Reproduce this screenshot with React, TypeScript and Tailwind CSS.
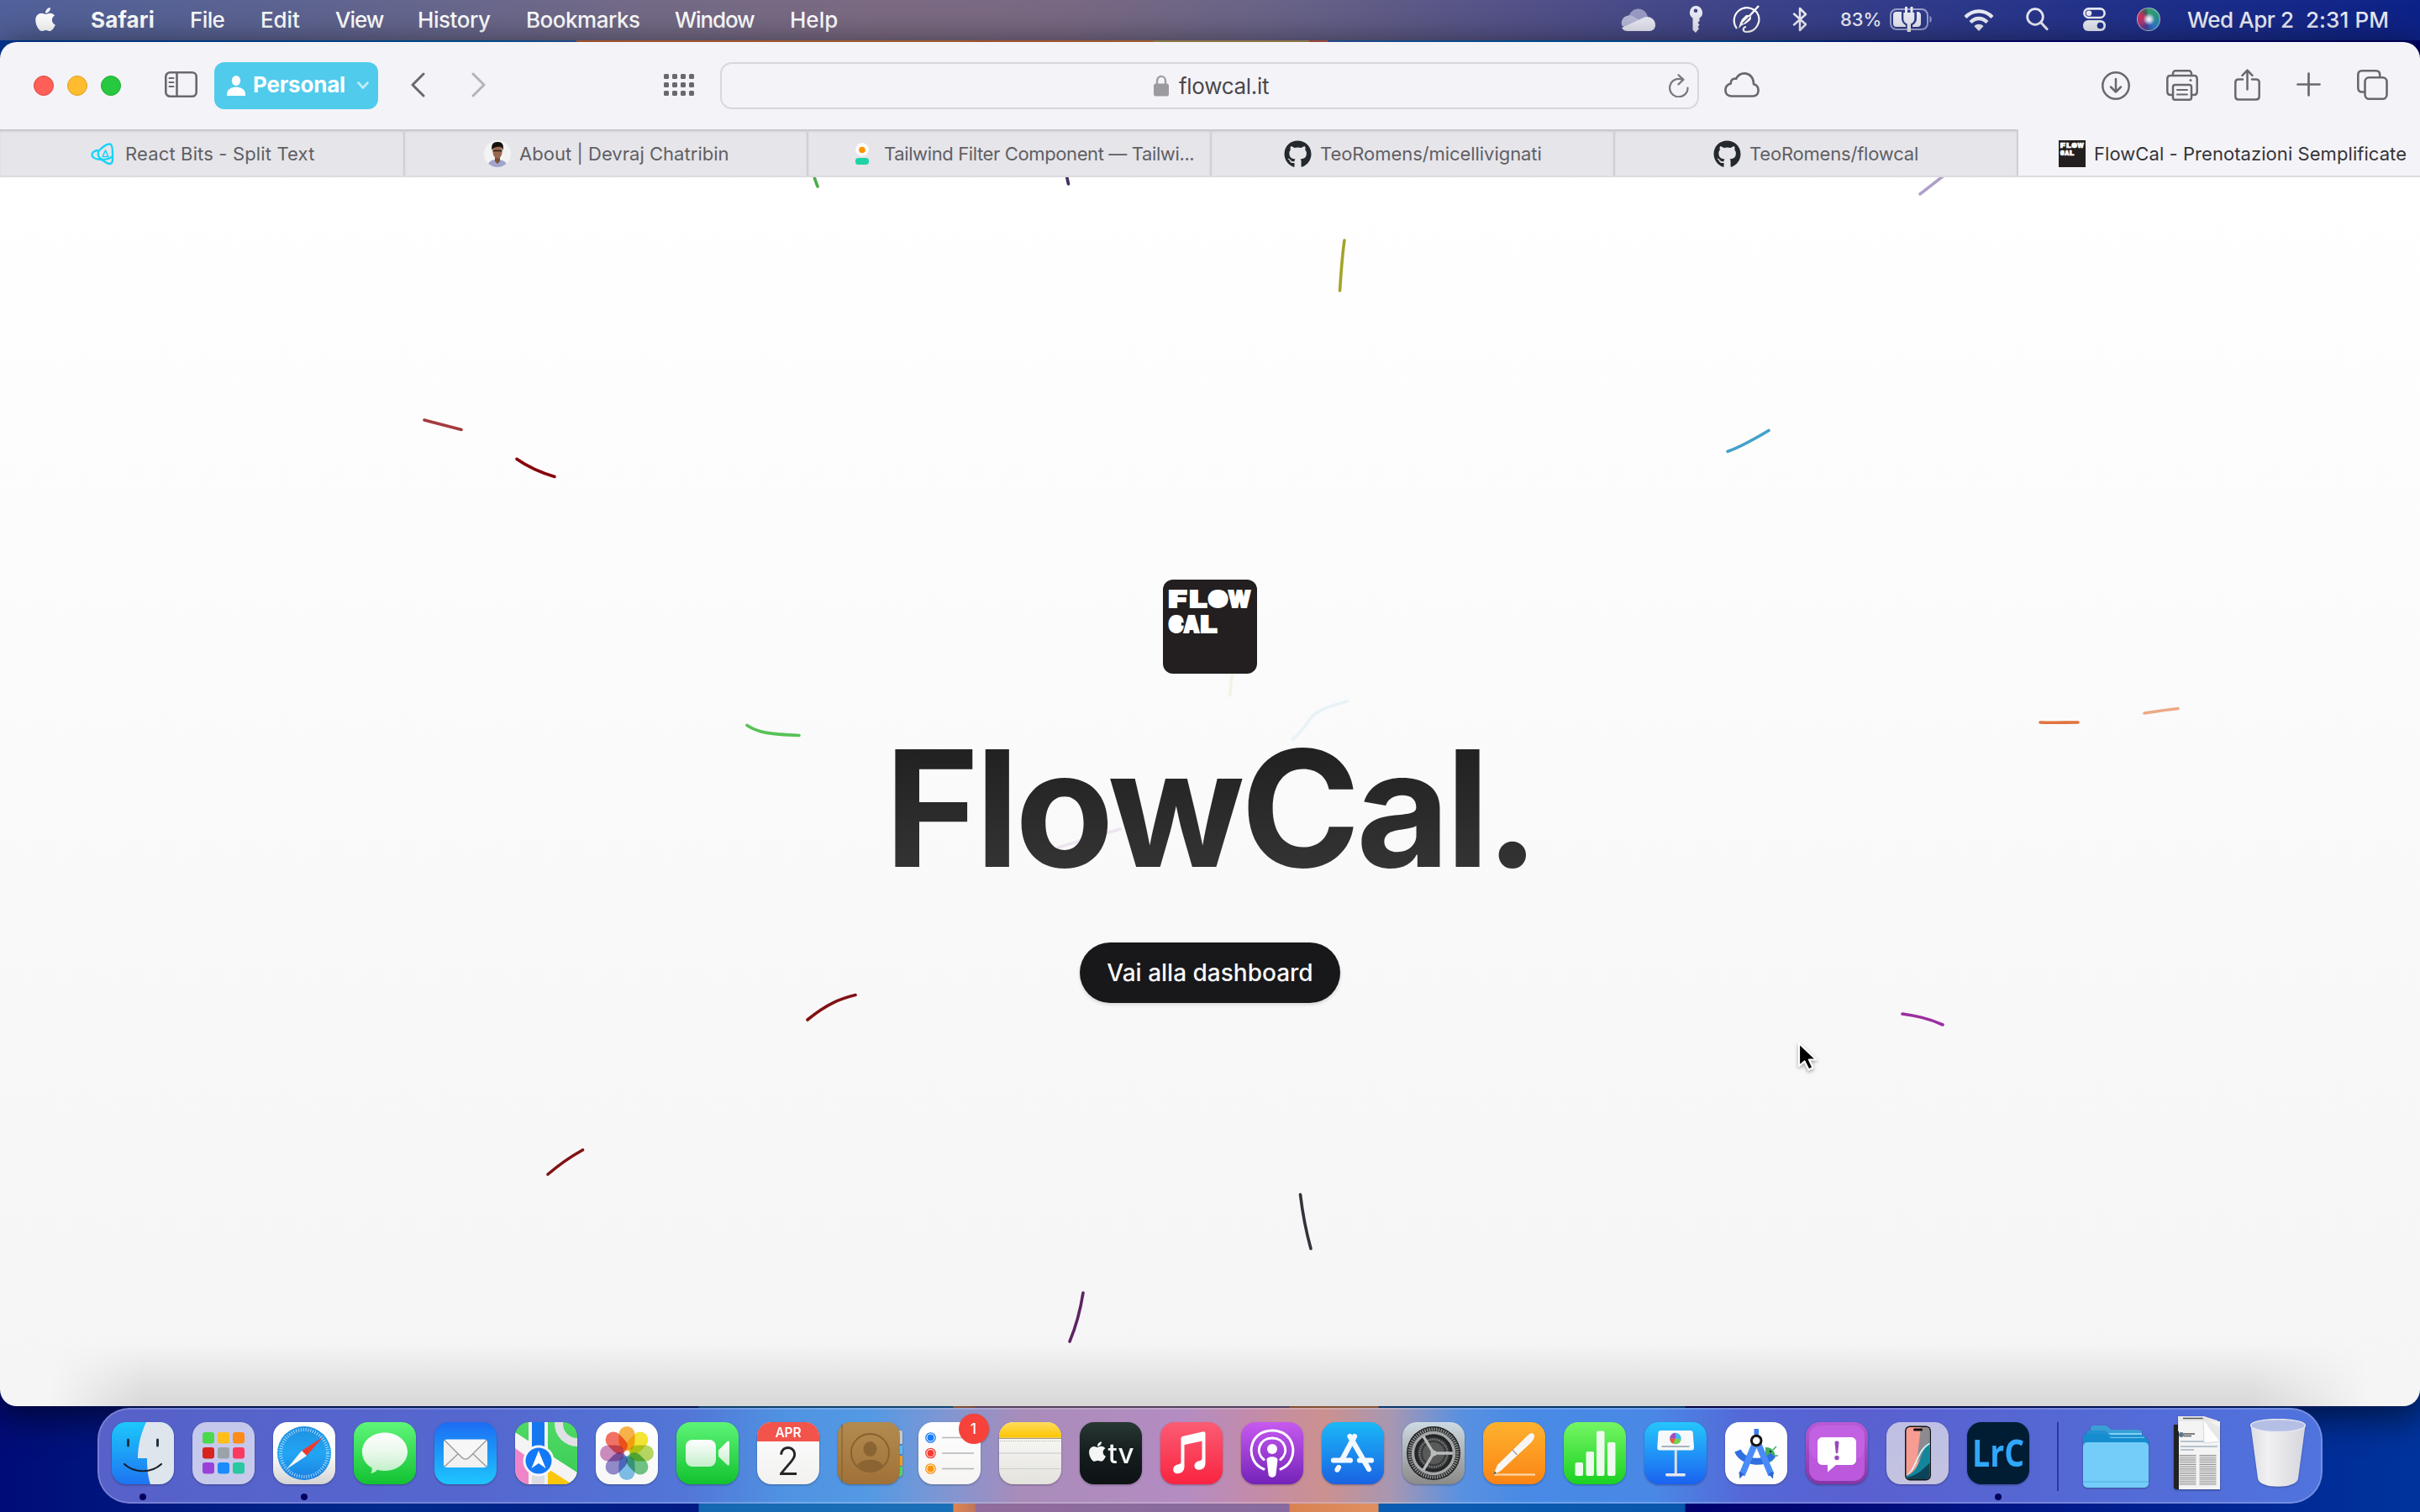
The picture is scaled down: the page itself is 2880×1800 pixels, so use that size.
import React from "react";
import { FaApple, FaGithub } from "react-icons/fa";

type Kids = { children?: React.ReactNode };

/* ---------- menu bar ---------- */

const MENUS = [
  { label: "File", cls: "w-[84px] tracking-[-0.6px]" },
  { label: "Edit", cls: "w-[89px] tracking-[-0.1px]" },
  { label: "View", cls: "w-[98px] tracking-[-1px]" },
  { label: "History", cls: "w-[129px] tracking-[-0.45px]" },
  { label: "Bookmarks", cls: "w-[177px] tracking-[-0.48px]" },
  { label: "Window", cls: "w-[137px] tracking-[-1.1px]" },
  { label: "Help", cls: "w-[80px]" },
];

function StatusIcons() {
  return (
    <div className="flex h-full items-center text-[#e9eaf4]">
      <svg width="42" height="30" viewBox="0 0 42 30" className="mr-[38px] shrink-0">
        <path d="M9 13C11 4 19 0 26 4c4 2 6 6 6 10l-14 8z" fill="#9a9bc6" />
        <path d="M1 22C-1 13 8 8 14 11l12 7-20 8z" fill="#b9bad9" />
        <path d="M27 13c7-3 14 2 14 9 0 4-3 7-7 7H8c-3 0-5-1-7-4z" fill="#e9eaf4" />
      </svg>
      <svg width="18" height="34" viewBox="0 0 18 34" className="mr-[35px] shrink-0">
        <path
          fillRule="evenodd"
          d="M9 1a8 8 0 0 1 4.500 14.600V19l-2 2 2 2.500-2 2.500 1.500 2L9 33l-3.500-3.500V15.600A8 8 0 0 1 9 1zm0 3.500a2.300 2.300 0 1 0 0 4.600 2.300 2.300 0 0 0 0-4.600z"
          fill="#e9eaf4"
        />
      </svg>
      <svg width="33" height="34" viewBox="0 0 33 34" className="mr-[38px] shrink-0" fill="none" stroke="#fff" strokeWidth="2.200">
        <path d="M5 28A15 15 0 1 1 29 9a15 15 0 0 1-12 23c-6 0-5-6-1-6" />
        <path d="M31 1 20 13" strokeWidth="2.500" />
        <path d="M20 12c3 2 2 4 1 6l-5 4-5 2-4 4 2-7 2-4 5-5z" fill="#fff" stroke="none" />
        <path d="m12 22 8-8" stroke="#3c4289" strokeWidth="1.200" />
      </svg>
      <svg width="18" height="30" viewBox="0 0 18 30" className="mr-[39px] shrink-0" fill="none" stroke="#e9eaf4" strokeWidth="2.500" strokeLinejoin="round" strokeLinecap="round">
        <path d="M2 8.500 16 21l-7 7V2l7 7L2 21.500" />
      </svg>
      <span className="mr-[10px] w-[49px] text-[22px] font-medium tracking-[-0.1px]">83%</span>
      <svg width="52" height="34" viewBox="0 0 52 34" className="mr-[36px] shrink-0">
        <rect x="1" y="5" width="44" height="24" rx="7" fill="none" stroke="#9aa0cc" strokeWidth="2" />
        <path d="M47.500 13c3 1 3 7 0 8z" fill="#9aa0cc" />
        <path d="M8 8h6v8c0 4 3 7 5 8v2H8a4 4 0 0 1-4-4V12a4 4 0 0 1 4-4zM32 8h1c2.500 0 4 1.500 4 4v10c0 2.500-1.500 4-4 4h-6v-2c3-2 5-4 5-8z" fill="#e9eaf4" />
        <path d="M19.500 2v9M26 2v9" stroke="#e9eaf4" strokeWidth="3" />
        <path d="M16.300 9h13v7c0 4-2.500 5.500-4.300 6.500v9.500h-4.300v-9.500c-2-1-4.400-2.500-4.400-6.500z" fill="#e9eaf4" />
      </svg>
      <svg width="36" height="27" viewBox="0 0 36 27" className="mr-[38px] shrink-0" fill="none" stroke="#e9eaf4" strokeWidth="4.300">
        <path d="M2 10.500c9-9.500 23-9.500 32 0" />
        <path d="M8 16.500c6-6 14-6 20 0" />
        <path d="M12.500 21.200c3-3.200 8-3.200 11 0L18 27z" fill="#e9eaf4" stroke="none" />
      </svg>
      <svg width="27" height="28" viewBox="0 0 27 28" className="mr-[41px] shrink-0" fill="none" stroke="#e9eaf4" strokeWidth="2.800" strokeLinecap="round">
        <circle cx="11" cy="11" r="9.300" />
        <path d="m18 18 7 7.500" strokeWidth="3.200" />
      </svg>
      <svg width="27" height="28" viewBox="0 0 27 28" className="mr-[37px] shrink-0">
        <rect x="1.400" y="1.400" width="24.200" height="10.600" rx="5.300" fill="none" stroke="#e9eaf4" strokeWidth="2.600" />
        <circle cx="7" cy="6.700" r="3.300" fill="#e9eaf4" />
        <rect x="0" y="15" width="27" height="13" rx="6" fill="#e9eaf4" />
        <circle cx="20.500" cy="21.500" r="3.800" fill="#24348a" />
      </svg>
      <span className="mr-[32px] h-[28px] w-[28px] shrink-0 rounded-full border border-white/50 bg-[radial-gradient(circle_at_52%_50%,#ffffff_0%,#d8dcf0_14%,transparent_38%),conic-gradient(#35a070,#2a9488_20%,#2b7fd0_40%,#4a3f9a_55%,#a83a78_68%,#d0305c_82%,#4a5a60_94%,#35a070)]" />
      <span className="w-[141px] text-[26px] font-medium tracking-[-0.44px] whitespace-nowrap">Wed Apr 2</span>
      <span className="text-[26px] font-medium tracking-[0.1px] whitespace-nowrap">2:31 PM</span>
    </div>
  );
}

function MenuBar() {
  return (
    <header className="flex h-[48px] items-center justify-between bg-[linear-gradient(to_right,#50609a_0px,#5b6392_300px,#736a87_760px,#7b6a82_1050px,#796983_1260px,#6a6487_1500px,#525188_1820px,#3c4289_2100px,#28368a_2400px,#0d2288_2880px)] pr-[37px] pb-[2px] text-white">
      <nav className="flex items-center text-[26px] font-medium">
        <FaApple className="mt-[-1px] ml-[38px] h-[32px] w-[32px]" />
        <span className="ml-[38px] w-[118px] font-bold tracking-[0.2px]">Safari</span>
        {MENUS.map((m) => (
          <span key={m.label} className={m.cls}>
            {m.label}
          </span>
        ))}
      </nav>
      <StatusIcons />
    </header>
  );
}

/* ---------- Safari toolbar ---------- */

function Toolbar() {
  return (
    <div className="flex h-[104px] items-center bg-[#f4f3f8] pl-[40px] text-[#69696d]">
      <div className="flex gap-[16px]">
        <span className="h-[24px] w-[24px] rounded-full border border-[#e0443e] bg-[#ff5f57]" />
        <span className="h-[24px] w-[24px] rounded-full border border-[#dfa023] bg-[#febc2e]" />
        <span className="h-[24px] w-[24px] rounded-full border border-[#1dad2b] bg-[#28c840]" />
      </div>
      <svg width="39" height="31" viewBox="0 0 39 31" className="mt-[-3px] ml-[52px] shrink-0" fill="none" stroke="currentColor" strokeWidth="2.600">
        <rect x="1.300" y="1.300" width="36.400" height="28.400" rx="5" />
        <path d="M14.500 1v29" />
        <path d="M5.500 8h5M5.500 13h5M5.500 18h5" strokeWidth="2" strokeLinecap="round" />
      </svg>
      <div className="ml-[20px] flex h-[56px] w-[195px] items-center rounded-[12px] bg-[#50cbec] pl-[15px] text-white">
        <svg width="22" height="24" viewBox="0 0 22 24" className="shrink-0" fill="currentColor">
          <ellipse cx="11" cy="6" rx="5.200" ry="6" />
          <path d="M0 24v-2c0-5 5-8.500 11-8.500S22 17 22 22v2z" />
        </svg>
        <span className="mt-[-3px] ml-[9px] text-[26px] font-bold tracking-[-0.2px]">Personal</span>
        <svg width="14" height="10" viewBox="0 0 14 10" className="ml-[14px] shrink-0" fill="none" stroke="#c2ecf8" strokeWidth="2.600" strokeLinecap="round" strokeLinejoin="round">
          <path d="m1.500 1.500 5.500 6 5.500-6" />
        </svg>
      </div>
      <svg width="17" height="30" viewBox="0 0 17 30" className="mt-[-2px] ml-[39px] shrink-0" fill="none" stroke="currentColor" strokeWidth="3" strokeLinecap="round" strokeLinejoin="round">
        <path d="M15 2 2 15l13 13" />
      </svg>
      <svg width="17" height="30" viewBox="0 0 17 30" className="mt-[-2px] ml-[55px] shrink-0" fill="none" stroke="#b5b4b9" strokeWidth="3" strokeLinecap="round" strokeLinejoin="round">
        <path d="m2 2 13 13L2 28" />
      </svg>
      <div className="mt-[-2px] ml-[212px] grid w-[36px] grid-cols-4 gap-x-[4px] gap-y-[4px]">
        {Array.from({ length: 12 }, (_, i) => (
          <span key={i} className="h-[6px] w-[6px] rounded-[1.5px] bg-[#69696d]" />
        ))}
      </div>
      <div className="ml-[31px] flex h-[56px] w-[1165px] items-center rounded-[14px] border-2 border-[#d8d7dc] bg-[#f4f3f8]">
        <svg width="18" height="26" viewBox="0 0 18 26" className="ml-[514px] shrink-0">
          <path d="M4 12V7.500C4 0 14 0 14 7.500V12" fill="none" stroke="#a09fa3" strokeWidth="2.400" />
          <rect x="0" y="10.500" width="18" height="15" rx="2.500" fill="#9b9a9e" />
        </svg>
        <span className="ml-[12px] text-[26px] tracking-[-0.29px] text-[#48484b]">flowcal.it</span>
        <svg width="24" height="28" viewBox="0 0 24 28" className="mr-[10px] ml-auto shrink-0" fill="none" stroke="#77777b" strokeWidth="2.200" strokeLinecap="round" strokeLinejoin="round">
          <path d="M22.500 16.500A10.700 10.700 0 1 1 16 6.800" />
          <path d="m11.500 1.200 6 5.600-6 5.600" />
        </svg>
      </div>
      <svg width="42" height="30" viewBox="0 0 42 30" className="mt-[-3px] ml-[30px] shrink-0" fill="none" stroke="currentColor" strokeWidth="2.700" strokeLinejoin="round">
        <path d="M9 28.500h25c4 0 6.600-3 6.600-7 0-4-2.600-6.500-5.600-7.200C35 6 30 1.400 24 1.400c-5 0-8 2.600-10 6.400-4-1-6.500 2-6.300 5.700C4 14.500 1.400 17 1.400 21.300c0 4.200 3 7.200 7.600 7.200z" />
      </svg>
      <svg width="34" height="34" viewBox="0 0 34 34" className="ml-[407px] shrink-0" fill="none" stroke="currentColor" strokeWidth="2.500" strokeLinecap="round" strokeLinejoin="round">
        <circle cx="17" cy="17" r="15.700" />
        <path d="M17 9v15.500M11 18.500l6 6 6-6" />
      </svg>
      <svg width="38" height="37" viewBox="0 0 38 37" className="mt-[-2px] ml-[43px] shrink-0" fill="none" stroke="currentColor" strokeWidth="2.500" strokeLinejoin="round" strokeLinecap="round">
        <path d="M8 7V4.300C8 2.500 9.500 1.300 11 1.300h16c1.500 0 3 1.200 3 3V7" />
        <path d="M8 30H5c-2.500 0-3.700-1.500-3.700-3.700V11C1.300 8.500 2.800 7 5 7h28c2.200 0 3.700 1.500 3.700 4v15.300c0 2.200-1.200 3.700-3.700 3.700h-3" />
        <rect x="8" y="18" width="22" height="17.700" rx="2.500" />
        <path d="M13 24h12M13 29.500h12" strokeWidth="2" />
        <circle cx="29" cy="12.500" r="1.500" fill="currentColor" stroke="none" />
      </svg>
      <svg width="31" height="38" viewBox="0 0 31 38" className="mt-[-3px] ml-[43px] shrink-0" fill="none" stroke="currentColor" strokeWidth="2.500" strokeLinecap="round" strokeLinejoin="round">
        <path d="M10 12.500H5c-2.300 0-3.700 1.400-3.700 3.700v16.500c0 2.300 1.400 3.700 3.700 3.700h21c2.300 0 3.700-1.400 3.700-3.700V16.200c0-2.300-1.400-3.700-3.700-3.700h-5" />
        <path d="M15.500 24.500V1.800M9.500 7.800l6-6.200 6 6.200" />
      </svg>
      <svg width="29" height="29" viewBox="0 0 29 29" className="mt-[-3px] ml-[43px] shrink-0" fill="none" stroke="currentColor" strokeWidth="2.700" strokeLinecap="round">
        <path d="M14.500 1.500v26M1.500 14.500h26" />
      </svg>
      <svg width="37" height="36" viewBox="0 0 37 36" className="mt-[-2px] ml-[43px] shrink-0" fill="none" stroke="currentColor" strokeWidth="2.600" strokeLinejoin="round">
        <rect x="9.500" y="9.300" width="26" height="25.400" rx="5" />
        <path d="M9.500 26.500H6c-3 0-4.700-1.700-4.700-4.700V6c0-3 1.700-4.700 4.700-4.700h16.500c3 0 4.700 1.700 4.700 4.700v3.300" />
      </svg>
    </div>
  );
}

/* ---------- tab strip ---------- */

/* letter, left edge, baseline, width */
const MARK: [string, number, number, number][] = [
  ["F", 6.5, 33, 22],
  ["L", 31.5, 33, 21],
  ["O", 53.5, 33, 24],
  ["W", 77.5, 33, 27],
  ["C", 6.5, 63, 18],
  ["A", 24.5, 63, 19],
  ["L", 44.5, 63, 20],
];

function FlowCalMark({ size }: { size: number }) {
  return (
    <svg width={size} height={size} viewBox="0 0 112 112" className="shrink-0 font-[Inter]" fill="#fff" stroke="#fff" fontWeight="900" fontSize="27">
      <rect width="112" height="112" fill="#231f20" stroke="none" />
      {MARK.map(([ch, x, y, w]) => (
        <text key={`${ch}${x}`} x={x} y={y} textLength={w} lengthAdjust="spacingAndGlyphs" strokeWidth="1.800" strokeLinejoin="miter">
          {ch}
        </text>
      ))}
      <circle cx="65.500" cy="23" r="8" stroke="none" />
      <ellipse cx="17" cy="53" rx="5" ry="10" stroke="none" />
      <path d="m34 46 4 12h-8z" stroke="none" />
      <path d="M9 14h10l-3 12-7 4z" stroke="none" />
    </svg>
  );
}

function ReactBitsIcon() {
  return (
    <svg width="32" height="32" viewBox="0 0 32 32" className="shrink-0" fill="none" stroke="#16d4f8" strokeWidth="2.300" strokeLinejoin="round">
      <path d="M25 4.500c3 .500 3 8 3 12 0 5 1 11-3 11.500-3 0-6-2-10-5-3-2-5-5-4-9 2-4 10-10 14-9.500z" />
      <path d="M11 12c-5 0-8 3-7.500 5.500C4 21 9 23 15 23c5 0 10-1 13-4" />
      <path d="m19.500 12 3.500 7.500h-7z" strokeWidth="1.600" />
    </svg>
  );
}

function AvatarIcon() {
  return (
    <svg width="32" height="32" viewBox="0 0 32 32" className="shrink-0">
      <defs>
        <clipPath id="avatar-clip">
          <circle cx="16" cy="16" r="16" />
        </clipPath>
      </defs>
      <g clipPath="url(#avatar-clip)">
        <rect width="32" height="32" fill="#f3f3f3" />
        <path d="M4 32c1-8 6-9 12-9s11 2 12 9z" fill="#a0a4cc" />
        <path d="M13 19h6v6l-3 3-3-3z" fill="#7d4f3b" />
        <ellipse cx="16" cy="13.500" rx="5.600" ry="8" fill="#9b6750" />
        <path d="M9.500 12C8 4 12 1.500 17 2c6 .500 6.500 5 5.500 10-1-3-2-4-4-4.500-3 .500-7 0-9 4.500z" fill="#15110f" />
        <path d="M10.500 12.500h11" stroke="#2a1c16" strokeWidth="1.600" />
      </g>
    </svg>
  );
}

function PersonIcon() {
  return (
    <svg width="32" height="32" viewBox="0 0 32 32" className="shrink-0">
      <circle cx="16" cy="11" r="7.800" fill="#fff" />
      <circle cx="16" cy="11.500" r="3.800" fill="#ff9500" />
      <rect x="8" y="21" width="16" height="8" rx="3.500" fill="#1fd3a6" />
    </svg>
  );
}

function TabStrip() {
  const github = <FaGithub className="h-[33px] w-[33px] shrink-0 text-[#24292f]" />;
  const tabs = [
    { t: "React Bits - Split Text", icon: <ReactBitsIcon />, cls: "w-[482px] pl-[106px] tracking-[0.15px]", gap: "ml-[11px]" },
    { t: "About | Devraj Chatribin", icon: <AvatarIcon />, cls: "w-[480px] pl-[94px] tracking-[0.03px]", gap: "ml-[10px]" },
    { t: "Tailwind Filter Component — Tailwi...", icon: <PersonIcon />, cls: "w-[480px] pl-[48px] tracking-[-0.38px]", gap: "ml-[10px]" },
    { t: "TeoRomens/micellivignati", icon: github, cls: "w-[480px] pl-[86px] tracking-[-0.06px]", gap: "ml-[10px]" },
    { t: "TeoRomens/flowcal", icon: github, cls: "w-[480px] pl-[117px] tracking-[-0.2px]", gap: "ml-[10px]" },
  ];
  return (
    <div className="flex h-[57px] border-b-2 border-[#dcdbe0] bg-[#f4f3f8] text-[22px] whitespace-nowrap">
      {tabs.map((t) => (
        <div
          key={t.t}
          className={`flex shrink-0 items-center border-r-2 border-[#d0cfd4] bg-[#e6e5ea] pt-[3px] text-[#606064] shadow-[inset_0_3px_3px_-1px_rgba(0,0,0,0.16)] ${t.cls}`}
        >
          {t.icon}
          <span className={t.gap}>{t.t}</span>
        </div>
      ))}
      <div className="flex grow items-center gap-[10px] pt-[3px] pl-[48px] tracking-[0.06px] text-[#353539]">
        <FlowCalMark size={32} />
        <span>FlowCal - Prenotazioni Semplificate</span>
      </div>
    </div>
  );
}

/* ---------- page ---------- */

const STROKES: [string, string][] = [
  ["#4cae4a", "M969 -1C970 4 972 8 973 11"],
  ["#40305f", "M1269.500 -1 1271.500 8"],
  ["#b0a0c6", "M2312 -1 2285 20"],
  ["#a3a32b", "M1600 75C1597 95 1596 115 1594.500 135"],
  ["#a43b3d", "M505 289 549 300.500"],
  ["#860008", "M615 335.500C630 346 645 352 660 356.500"],
  ["#44a0cb", "M2056 326.500C2072 321 2089 311 2105 301.500"],
  ["#57c255", "M889 652.500C902 661 914 663 951 664.500"],
  ["#e2733d", "M2428 649C2443 649.500 2458 649 2473 649"],
  ["#ecA985", "M2552 638C2565 636 2578 634 2592 632.500"],
  ["#801216", "M961 1003C984 984 1000 978 1018 973.500"],
  ["#9d2da1", "M2264 996C2280 998 2297 1002 2312 1009"],
  ["#801216", "M652 1187C666 1175 679 1166 693.500 1158"],
  ["#33333a", "M1547.500 1211C1550 1232 1554 1254 1560 1275.500"],
  ["#5d2463", "M1289 1328C1286 1347 1281 1367 1273 1386"],
  ["#f3f3e5", "M1466.500 590 1463.500 617"],
  ["#e8f2f7", "M1603 624C1565 634 1562 640 1554 652C1549 659 1545 664 1538.500 669"],
  ["#ece4ef", "M1333 776 1259 798"],
];

function Page() {
  return (
    <main className="relative flex h-[1463px] flex-col items-center justify-center gap-[64px] bg-linear-to-b from-white to-[#f5f5f5] pb-[1px]">
      <svg className="absolute inset-0" width="2880" height="1463" viewBox="0 0 2880 1463" fill="none" strokeWidth="3.600" strokeLinecap="round">
        {STROKES.map(([c, d]) => (
          <path key={d} d={d} stroke={c} />
        ))}
      </svg>
      <div className="relative h-[112px] w-[112px] overflow-hidden rounded-[12px]">
        <FlowCalMark size={112} />
      </div>
      <h1 className="relative bg-linear-to-b from-[#1e1e1e] to-[#373737] bg-clip-text text-[192px] leading-[192px] font-bold tracking-[-4.8px] text-transparent">
        FlowCal.
      </h1>
      <button className="relative flex h-[72px] items-center rounded-full bg-[#18181b] px-[32px] text-[28px] font-medium text-[#fafafa] shadow-[0_2px_4px_rgba(0,0,0,0.15)]">
        Vai alla dashboard
      </button>
      <div className="absolute inset-x-[60px] bottom-0 h-[76px] bg-linear-to-b from-transparent to-black/12 [mask-image:linear-gradient(to_right,transparent,#000_110px,#000_2620px,transparent)]" />
      <svg className="absolute top-[1027px] left-[2137px] drop-shadow-[0_2px_2px_rgba(0,0,0,0.35)]" width="30" height="42" viewBox="0 0 30 42">
        <path d="M4 4v27l6.500-5.500 5 10 5-2.500-4.500-9.500h8.500z" fill="#000" stroke="#fff" strokeWidth="2.200" strokeLinejoin="round" />
      </svg>
    </main>
  );
}

/* ---------- dock ---------- */

function V({ id, stops }: { id: string; stops: string[] }) {
  return (
    <linearGradient id={id} x1="0" y1="0" x2="0" y2="1">
      {stops.map((c, i) => (
        <stop key={i} offset={i / (stops.length - 1)} stopColor={c} />
      ))}
    </linearGradient>
  );
}

function Tile({ id, stops, running, children }: { id: string; stops: string[]; running?: boolean } & Kids) {
  return (
    <div className="relative h-[74px] w-[74px] shrink-0">
      <svg width="74" height="74" viewBox="0 0 74 74" className="overflow-visible drop-shadow-[0_1px_1px_rgba(0,0,0,0.3)]">
        <defs>
          <V id={`${id}-bg`} stops={stops} />
          <clipPath id={`${id}-clip`}>
            <rect width="74" height="74" rx="17" />
          </clipPath>
        </defs>
        <rect width="74" height="74" rx="17" fill={`url(#${id}-bg)`} />
        {children}
      </svg>
      {running && <span className="absolute top-[85px] left-[33px] h-[8px] w-[8px] rounded-full bg-[#05005c]" />}
    </div>
  );
}

const PETALS = ["#f9a01b", "#f4e000", "#a5cf3a", "#4fb866", "#5fb2e6", "#7b6fc0", "#c070b0", "#f0503c"];
const PADS = ["#4cd84a", "#ffbe1a", "#fb8c1a", "#d8221e", "#9aa3a8", "#fb3a60", "#9a42d8", "#1b8bfb", "#28c8a0"];

function Apps() {
  return (
    <>
      <Tile id="finder" stops={["#1cc8fb", "#1e74f2"]} running>
        <g clipPath="url(#finder-clip)">
          <path d="M41 0C35 12 31 28 31 43h11c0 12 1 22 4 31h28V0z" fill="#dfe5ed" />
        </g>
        <path d="M19.500 21v7M54.500 21v7" stroke="#22303c" strokeWidth="3" strokeLinecap="round" />
        <path d="M15 50c12 11 32 11 44 0" fill="none" stroke="#16202b" strokeWidth="2.200" strokeLinecap="round" />
      </Tile>
      <Tile id="launchpad" stops={["#c4c8ea", "#c8caec"]}>
        {PADS.map((c, i) => (
          <rect key={c} x={12 + (i % 3) * 18} y={12 + Math.floor(i / 3) * 18} width="14" height="13.500" rx="3.200" fill={c} />
        ))}
      </Tile>
      <Tile id="safari" stops={["#ffffff", "#fdfdfd", "#d4d4d4"]} running>
        <defs>
          <V id="safari-dial" stops={["#1e8fe0", "#22a6f4", "#1a7fe0"]} />
        </defs>
        <circle cx="37" cy="37" r="32" fill="url(#safari-dial)" />
        <circle cx="37" cy="37" r="28" fill="none" stroke="#cfeaff" strokeWidth="4" strokeDasharray="0.800 2.100" />
        <path d="M59 18 34 34l6 6z" fill="#f0392e" />
        <path d="m16 56 18-22 6 6z" fill="#f6f6f6" />
      </Tile>
      <Tile id="messages" stops={["#5ff679", "#12c232"]}>
        <defs>
          <V id="messages-bubble" stops={["#ffffff", "#e8f8ea", "#bdeec5"]} />
        </defs>
        <path d="M37 12.500c15 0 27 10 27 22.800S52 58 37 58c-3 0-6-.400-9-1.200-2 2.400-5 4-8 4.200 1.500-2 2-4 1.500-6.500C14.500 50.500 10 43.500 10 35.300 10 22.500 22 12.500 37 12.500z" fill="url(#messages-bubble)" />
      </Tile>
      <Tile id="mail" stops={["#1c6cf3", "#1ec6fd"]}>
        <rect x="11" y="20.500" width="52" height="33.500" rx="4" fill="#f1f1f1" />
        <path d="m12 53 18-17M62 53 44 36" stroke="#9a9a9c" strokeWidth="1.300" fill="none" />
        <path d="m12 21.500 20 20c3 3.500 7 3.500 10 0l20-20" fill="#f7f7f7" stroke="#98989a" strokeWidth="1.300" />
      </Tile>
      <Tile id="maps" stops={["#4fd964", "#38cc55"]}>
        <g clipPath="url(#maps-clip)">
          <path d="M0 28 20 42v32H0z" fill="#ef85c8" />
          <path d="M0 12 74 60v14H60L0 31z" fill="#f4f4f4" />
          <path d="M38 55l30 19H38z" fill="#fcc60c" />
          <path d="M16 0h23v74H16z" fill="#f2f2f2" />
          <path d="M20 0h15v36H20z" fill="#1577ef" />
          <path d="M20 40h15v34H20z" fill="#dcdde2" />
          <circle cx="74" cy="2" r="22" fill="none" stroke="#dfe1e5" strokeWidth="10" />
        </g>
        <circle cx="28" cy="46" r="18.500" fill="#f7f7f9" />
        <circle cx="28" cy="46" r="15.500" fill="#1479f4" />
        <path d="m28 34 8.500 21-8.500-6-8.500 6z" fill="#fff" />
      </Tile>
      <Tile id="photos" stops={["#ffffff", "#f7f7f7"]}>
        {PETALS.map((c, i) => (
          <rect key={c} x="27.500" y="5" width="19" height="29" rx="9.500" fill={c} fillOpacity="0.800" transform={`rotate(${i * 45} 37 37)`} className="mix-blend-multiply" />
        ))}
      </Tile>
      <Tile id="facetime" stops={["#5df477", "#12c22f"]}>
        <defs>
          <V id="facetime-cam" stops={["#ffffff", "#c5efcb"]} />
        </defs>
        <rect x="11" y="21" width="36" height="32" rx="8" fill="url(#facetime-cam)" />
        <path d="M50 33.500 60.500 23c1-1 2.500-.500 2.500 1v26c0 1.500-1.500 2-2.500 1L50 41z" fill="url(#facetime-cam)" />
      </Tile>
      <Tile id="calendar" stops={["#fefefe", "#f2f1f0"]}>
        <g clipPath="url(#calendar-clip)">
          <rect width="74" height="23" fill="#f2544c" />
        </g>
        <text x="37" y="18" textAnchor="middle" fontSize="15.500" fontWeight="600" fill="#fff" textLength="31">
          APR
        </text>
        <text x="37" y="63" textAnchor="middle" fontSize="47" fontWeight="300" fill="#262626" textLength="27" lengthAdjust="spacingAndGlyphs">
          2
        </text>
      </Tile>
      <Tile id="contacts" stops={["#b28b50", "#a07138"]}>
        <path d="M72 10h3c2 0 2 2 2 4v12h-5z" fill="#c9c9c5" />
        <path d="M72 28h5v10h-5z" fill="#55bff0" />
        <path d="M72 40h5v12h-5z" fill="#f99a15" />
        <path d="M72 53h5v8c0 3-2 4-5 4z" fill="#58d35c" />
        <rect width="74" height="74" rx="15" fill="url(#contacts-bg)" />
        <path d="M5 3v68" stroke="#85602f" strokeWidth="1.200" />
        <circle cx="38.500" cy="36.500" r="22.500" fill="none" stroke="#86612f" strokeWidth="1.800" />
        <ellipse cx="38.500" cy="32" rx="8" ry="9" fill="#8a6432" />
        <path d="M23 53c2-11 29-11 31 0-8 9-23 9-31 0z" fill="#8a6432" />
      </Tile>
      <Tile id="reminders" stops={["#ffffff", "#f5f4f2"]}>
        {["#1a7cf5", "#f53b33", "#fa9510"].map((c, i) => (
          <g key={c}>
            <circle cx="14.500" cy={18.5 + i * 18.5} r="5.700" fill="#fff" stroke={c} strokeWidth="1.300" />
            <circle cx="14.500" cy={18.5 + i * 18.5} r="4" fill={c} />
            <path d={`M28 ${18.5 + i * 18.5}h38`} stroke="#b5b5b8" strokeWidth="1.300" />
          </g>
        ))}
        <circle cx="66" cy="8" r="18" fill="#f6423a" />
        <text x="65.500" y="14" textAnchor="middle" fontSize="17.500" fontWeight="500" fill="#fff">
          1
        </text>
      </Tile>
      <Tile id="notes" stops={["#fdfdfb", "#e3e2dc"]}>
        <defs>
          <V id="notes-band" stops={["#ffdc5c", "#fdc400"]} />
        </defs>
        <g clipPath="url(#notes-clip)">
          <rect width="74" height="18.500" fill="url(#notes-band)" />
          <path d="M0 19.300h74" stroke="#a99a70" strokeWidth="1.200" />
          <path d="M1 22.500h74" stroke="#a8a8a8" strokeWidth="1.200" strokeDasharray="1 1.600" />
          <path d="M0 37h74" stroke="#dcdbdf" strokeWidth="2" />
          <path d="M0 55.500h74" stroke="#cfcecf" strokeWidth="1.200" />
        </g>
      </Tile>
      <Tile id="tv" stops={["#293733", "#141d1e", "#0d1214"]}>
        <FaApple x="7.500" y="21.500" size="27" color="#f4f6f6" />
        <text x="33.500" y="48.500" fontSize="32" fontWeight="500" fill="#f4f6f6" textLength="31" lengthAdjust="spacingAndGlyphs">
          tv
        </text>
      </Tile>
      <Tile id="music" stops={["#fb5c74", "#fa2440"]}>
        <path d="M24.500 20c0-1.800.800-2.800 2.500-3.200L50 11.500c2-.500 3.500.300 3.500 2.300v35c0 5-3 8-7.500 8-3.500 0-5.500-2-5.500-4.800 0-3.300 2.300-5 5.500-5.800 2.500-.600 3.500-1.200 3.500-3.200V22.500l-21 4.600V53c0 5-3.500 8.200-7.800 8.200-3.400 0-5.500-2-5.500-4.800 0-3.300 2.400-5 5.500-5.800 2.600-.700 3.800-1.300 3.800-3.300z" fill="#fff" />
      </Tile>
      <Tile id="podcasts" stops={["#c75af0", "#7422b8"]}>
        <g fill="none" stroke="#fff" strokeWidth="3">
          <path d="M27 56C4 47 8 10 37 10s33 37 10 46" strokeLinecap="round" />
          <path d="M27 44.500c-11-9-5-25.500 10-25.500s21 16.500 10 25.500" strokeLinecap="round" />
        </g>
        <circle cx="37" cy="32" r="6" fill="#fff" />
        <path d="M30.500 45c0-5 13-5 13 0l-2 17c-.500 5-8.500 5-9 0z" fill="#fff" />
      </Tile>
      <Tile id="appstore" stops={["#1ab8f8", "#1a62e2"]}>
        <g stroke="#f3f8ff" strokeLinecap="round" strokeWidth="6.200" fill="none">
          <path d="M14 45.500h20M45 45.500h14" />
          <path d="M39 17 24 45M33.500 17 56 56" />
          <path d="m20 54-1.500 2.500" />
        </g>
      </Tile>
      <Tile id="settings" stops={["#cddae2", "#8b8a88"]}>
        <circle cx="37" cy="37" r="32" fill="#242525" />
        <circle cx="37" cy="37" r="28.500" fill="none" stroke="#8f9293" strokeWidth="4" strokeDasharray="1.500 1.300" />
        <circle cx="37" cy="37" r="24.500" fill="none" stroke="#a5a8a9" strokeWidth="3.500" />
        <circle cx="37" cy="37" r="16" fill="#59595a" stroke="#3a3b3c" strokeWidth="6" />
        <circle cx="37" cy="37" r="16.500" fill="none" stroke="#858787" strokeWidth="2" strokeDasharray="1.500 1.200" />
        <g stroke="#b9bcbd" strokeWidth="3.400">
          <path d="M37 37h23M37 37 25 17M37 37 25 57" />
        </g>
        <circle cx="37" cy="37" r="3.500" fill="#b9bcbd" />
      </Tile>
      <Tile id="pages" stops={["#fdb22e", "#fb8414"]}>
        <path d="M13 62.500h49" stroke="#fdd09a" strokeWidth="2.400" />
        <path d="m12 63 5-12L54 15c3-3 8-2 7 3-1 3-2 4-4 6.500L21 58z" fill="#f7f6f4" />
        <path d="m12 63 2-4.500 2 2z" fill="#55504a" />
        <path d="m35 33 5.500 6" stroke="#a9a6a2" strokeWidth="1.500" />
      </Tile>
      <Tile id="numbers" stops={["#74f663", "#1cd022"]}>
        <g fill="#eefaee">
          <rect x="13.500" y="48" width="9.500" height="16" rx="2" />
          <rect x="26.500" y="35" width="9.500" height="29" rx="2" />
          <rect x="39" y="10.500" width="9.500" height="53.500" rx="2" />
          <rect x="52" y="24" width="9.500" height="40" rx="2" />
        </g>
      </Tile>
      <Tile id="keynote" stops={["#25c6fd", "#1b62f0"]}>
        <path d="M35.800 33h3v30h-3z" fill="#dcdfe4" />
        <rect x="25" y="61" width="24" height="3.500" rx="1.700" fill="#e6e8ec" />
        <path d="M19 10h36c1.500 0 2.500 1 2.700 2.500L59 30c.200 2-.800 3.500-2.700 3.500H18c-2 0-3-1.500-2.700-3.500l1.200-17.500C16.700 11 17.500 10 19 10z" fill="#f7f8fa" />
        <path d="M20.500 29h33" stroke="#a9b3be" strokeWidth="2" />
        <circle cx="37" cy="19.500" r="6.700" fill="#3fb8f5" />
        <path d="M37 19.500V12.800a6.700 6.700 0 0 0-6.700 6.700z" fill="#a54ac0" />
        <path d="M37 19.500h-6.700a6.700 6.700 0 0 0 4 6.200z" fill="#f4543a" />
        <path d="m37 19.500-3 6.200c3 1.200 8 .500 9.700-5z" fill="#7cd04a" />
      </Tile>
      <Tile id="studio" stops={["#ffffff", "#fcfcfc"]}>
        <path d="M48 30c7-1 13 6 11 12-2 5-6 7-11 6z" fill="#3fae5e" />
        <path d="m57 33 4-4M59 40h4" stroke="#3fae5e" strokeWidth="1.600" />
        <circle cx="54" cy="35" r="1.300" fill="#163c22" />
        <path d="M15 34c6 15 32 17 42 5" fill="none" stroke="#2f6fe0" strokeWidth="8" />
        <path d="M35 27 20 63M40 27l15 36" stroke="#4a8cf7" strokeWidth="7.500" />
        <path d="m16.500 59 6 2.500-5 6zM57.500 59l-6 2.500 5.500 6z" fill="#2b62d0" />
        <path d="M34.500 8h5.500v8h-5.500z" fill="#3a7df0" />
        <circle cx="37.200" cy="22" r="5.800" fill="#fff" stroke="#151515" strokeWidth="3" />
      </Tile>
      <Tile id="feedback" stops={["#b85bd6", "#8436a6"]}>
        <rect x="4" y="4" width="66" height="66" rx="13" fill="#bb58dc" />
        <rect x="4" y="4" width="66" height="40" rx="13" fill="#c668e6" fillOpacity="0.600" />
        <path d="M20 18h34c3.500 0 6 2.500 6 6v21c0 3.500-2.500 6-6 6H36l-10 8.500v-8.500h-6c-3.500 0-6-2.500-6-6V24c0-3.500 2.500-6 6-6z" fill="#fff" />
        <path d="M34.500 24c0-2 5-2 5 0l-1.300 13h-2.400z" fill="#9a48bd" />
        <circle cx="37" cy="42.500" r="2.700" fill="#9a48bd" />
      </Tile>
      <Tile id="iphone" stops={["#bdbfe4", "#c4c4e0"]}>
        <defs>
          <clipPath id="iphone-screen">
            <rect x="23.500" y="6" width="28" height="62" rx="4.500" />
          </clipPath>
        </defs>
        <rect x="22" y="4.500" width="31" height="65" rx="6" fill="#141414" />
        <g clipPath="url(#iphone-screen)">
          <rect x="23" y="6" width="30" height="62" fill="#f79c92" />
          <path d="M52 6v25L36 48 41 6z" fill="#8d8a90" />
          <path d="M52 22C38 36 42 58 23 64v4h29z" fill="#14869c" />
          <path d="M52 24C34 34 37 52 23 64c16-8 12-28 29-38z" fill="#d9f3f2" />
          <path d="M52 48C44 56 36 64 23 66v3h29z" fill="#0c4358" />
        </g>
        <rect x="32" y="7.500" width="11" height="3" rx="1.500" fill="#111" />
      </Tile>
      <Tile id="lightroom" stops={["#001d34", "#001d34"]} running>
        <text x="6" y="52.500" fontSize="44.500" fontWeight="700" fill="#30a7fe" textLength="62" lengthAdjust="spacingAndGlyphs" className="font-['Open_Sans']">
          LrC
        </text>
      </Tile>
    </>
  );
}

function Downloads() {
  return (
    <svg width="78" height="76" viewBox="0 0 78 76" className="ml-[29px] shrink-0 drop-shadow-[0_1px_1px_rgba(0,0,0,0.3)]">
      <path d="M9 6c0-4 1-5 4-5h14c3 0 4 4 7 5h32c3 0 4 1 4 4v16H9z" fill="#3a9fd6" />
      <path d="M30 10h40v4H28z" fill="#7cd2f6" />
      <path d="M4 12c0-4 1-5 4-5h17c3 0 5 4 8 5h37c3 0 4 1 4 4v16H4z" fill="#2391d0" />
      <path d="M27 15h46v4H27z" fill="#74cef6" />
      <path d="M0 18c0-5 1-7 5-7h20c4 0 6 5 9 5h39c4 0 5 2 5 6v8H0z" fill="#148ccd" />
      <rect y="21" width="78" height="54" rx="5" fill="#74cdf8" />
      <path d="M0 68h78" stroke="#5cb9e8" strokeWidth="1.300" />
    </svg>
  );
}

function Documents() {
  return (
    <svg width="57" height="88" viewBox="0 0 57 88" className="ml-[30px] shrink-0 drop-shadow-[0_1px_1px_rgba(0,0,0,0.4)]">
      <path d="M0 10h6v77H2l-2-2z" fill="#222" />
      <path d="M5 0h31l16 5v13H5z" fill="#e9e9e9" />
      <path d="M6 6h49v81H6z" fill="#f4f4f4" />
      <path d="M11 2.500h24" stroke="#555" strokeWidth="1.500" />
      <circle cx="9" cy="22" r="3" fill="#5c7690" />
      <path d="M12 21h13M12 23.500h9" stroke="#5a5a5a" strokeWidth="1.400" />
      <path d="M8 30h34M8 36h44M8 40h16" stroke="#a3b4c4" strokeWidth="1.300" />
      <path d="M16.500 46v36M40.500 46v36" stroke="#8c8c8c" strokeWidth="20" strokeDasharray="1 1.200" />
      <path d="M35 2c4 8 12 12 20 28L36 32z" fill="#fdfdfd" stroke="#d0d0d0" strokeWidth="0.800" />
      <path d="M36 2 55 13v17L43 16z" fill="#e3e3e3" fillOpacity="0.700" />
    </svg>
  );
}

function Trash() {
  return (
    <svg width="66" height="82" viewBox="0 0 66 82" className="ml-[34px] shrink-0 drop-shadow-[0_1px_1px_rgba(0,0,0,0.25)]">
      <defs>
        <linearGradient id="trash-body" x1="0" x2="1" y1="0" y2="0">
          <stop offset="0" stopColor="#dcdde2" />
          <stop offset="0.300" stopColor="#f1f1f3" />
          <stop offset="0.700" stopColor="#e2e2e6" />
          <stop offset="1" stopColor="#d5d6dd" />
        </linearGradient>
      </defs>
      <path d="M.500 8 9 71c1 13 47 13 48 0l8.500-63z" fill="url(#trash-body)" />
      <ellipse cx="33" cy="8" rx="32.500" ry="7.500" fill="#b5bfe6" stroke="#e8e9f2" strokeWidth="1.300" />
    </svg>
  );
}

function Dock() {
  return (
    <footer className="mt-[2px] ml-[116px] flex h-[114px] w-[2648px] items-start rounded-[38px] border-2 border-white/20 bg-[linear-gradient(to_right,#5661c9_0px,#5567cf_450px,#5276d7_700px,#4f93e2_820px,#5499e4_920px,#8096d2_1010px,#a98cba_1100px,#b48cc2_1290px,#c28bac_1370px,#cc918f_1460px,#a797b2_1540px,#5a91e0_1620px,#488ae6_1700px,#4a88e6_1850px,#5468d6_1960px,#5a60d0_2100px,#5567d3_2300px,#5073dd_2640px)] bg-origin-border pt-[15px] pl-[15px]">
      <div className="flex gap-[22px]">
        <Apps />
      </div>
      <div className="flex h-[82px] items-center">
        <span className="ml-[33px] h-[82px] w-[2px] bg-[#2a39a8]" />
        <Downloads />
        <div className="mt-[-8px] flex items-center">
          <Documents />
          <Trash />
        </div>
      </div>
    </footer>
  );
}

export default function App() {
  return (
    <div className="relative h-[1800px] w-[2880px] overflow-hidden font-[Inter,sans-serif]">
      <div className="absolute inset-0 flex flex-col">
        <div className="h-1/2 bg-[linear-gradient(to_right,#003a9e_0px,#0060b0_560px,#2a60b0_686px,#cf6a3c_686px,#cf7a40_1140px,#cf6a3c_1160px,#cf7a40_1372px,#b89a5c_1373px,#b89a5c_1558px,#c8604a_1558px,#c8604a_1580px,#2c60b4_1581px,#0060b4_1840px,#0050a4_2060px,#000078_2300px,#00006b_2880px)]" />
        <div className="h-1/2 bg-[linear-gradient(to_right,#000c78_0px,#002a8c_460px,#001a84_831px,#1468b0_832px,#1a70b8_1134px,#df8551_1135px,#c0765c_1160px,#8f6c9c_1162px,#876a9e_1534px,#d98252_1535px,#e09060_1640px,#0a5cb2_1641px,#0856ac_2005px,#00006e_2006px,#000a76_2180px,#001a8a_2450px,#00349c_2880px)]" />
      </div>
      <div className="relative flex flex-col">
        <MenuBar />
        <div className="mt-[2px] overflow-hidden rounded-[20px] shadow-[0_8px_40px_6px_rgba(0,0,0,0.55)]">
          <Toolbar />
          <TabStrip />
          <Page />
        </div>
        <Dock />
      </div>
    </div>
  );
}
